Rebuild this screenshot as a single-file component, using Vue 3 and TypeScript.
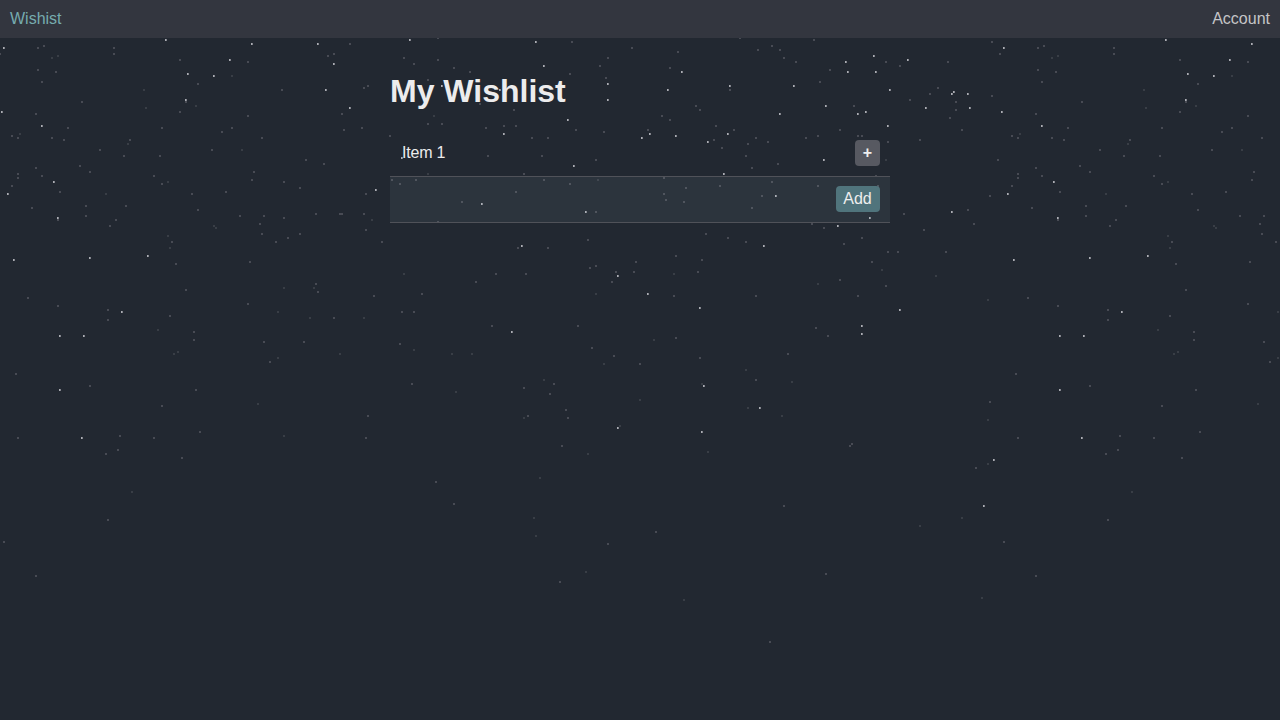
<script setup lang="ts">
import { ref } from 'vue'

type Star = [number, number]

// Sky tile: 1000px wide, repeated horizontally. Each star is a 2x2 square.
const parse = (list: string): Star[] =>
  list.trim().split(/\s+/).map((pair) => pair.split(',').map(Number) as Star)

const bright = parse(`
4,48 166,40 230,60 188,74 214,76 186,100 2,112 42,126
252,44 318,44 334,64 326,90 350,108 410,40 442,86
536,42 544,66 608,84 608,100 568,120 682,72 668,90 730,86 500,90
874,56 846,62 908,60 848,72 876,72 794,86 890,90 826,106 780,114 858,114 866,112 926,108 952,94 954,92 968,94 970,108 888,126
54,182 8,194 58,218 148,256 90,258 14,260
376,190 482,204 402,158
504,134 642,138 650,134 676,136 728,134 708,142 574,166 724,174 586,212 522,246
824,160 776,196 870,218 838,226 764,246 952,212
122,312 60,336 84,336 60,390 82,438
618,276 648,294 700,308 512,332 704,386 760,408 618,428 702,432 900,310 862,326 862,334 994,460 984,506
`)

const soft = parse(`
0,54 38,48 44,46 114,48 114,54 180,60 248,62 38,70 56,72 42,82 82,102 36,114 198,84 180,112 248,116 68,128 162,128 232,128 186,102
350,44 334,54 328,56 404,58 414,64 438,38 438,60 454,68 470,72 282,90 368,86 364,88 342,114 344,130 362,128 428,80 428,124 442,124 480,104 486,128
572,42 608,58 600,66 570,74 606,78 632,48 678,52 670,68 730,90 514,110 504,126 516,126 576,130 648,130 696,106 700,110 662,116 670,120 716,126 734,130 740,38
814,40 758,50 772,46 780,50 784,58 796,62 830,70 820,82 886,62 900,66 948,62 992,42 854,106 910,100 938,88 930,94 956,102 956,110 950,118 992,96 840,130 962,130
12,136 18,138 52,138 64,140 130,140 100,150 124,156 160,156 36,168 80,166 90,172 18,174 18,178 42,176 12,186 60,192 154,176 162,184 192,194 212,150 226,192 222,132 32,208 86,206 126,206 86,216 116,220 110,226 58,220 198,210 240,216 172,242
262,138 390,136 306,160 324,164 254,172 252,180 284,182 300,188 366,194 316,214 340,214 342,214 364,214 264,216 284,218 260,224 262,234 300,234 288,238 276,242 366,230 382,242 488,156 392,180 416,180 400,184 462,202 438,222
604,132 532,138 548,138 542,156 596,160 524,174 544,180 570,184 516,192 596,212 714,140 722,148 748,144 746,156 664,178 686,188 664,194 666,200 684,202 720,186 588,240 518,248 548,248 706,234 728,238 746,242 676,256 702,260
756,138 768,142 806,138 818,136 858,136 862,136 888,142 920,140 778,164 752,168 772,182 818,186 762,196 752,208 876,176 878,186 998,160 812,224 824,228 862,238 844,244 888,252 898,252 904,214 924,230 968,210 974,224 990,196 946,252 872,262
176,264 250,262 186,290 28,298 58,306 108,310 108,320 248,304 316,284 318,292 170,316 194,332 194,340 264,342 304,342 16,374 90,386 196,390 162,406 18,438 120,436 154,438 118,450 106,454 200,432 182,458 108,520 4,542 36,576 270,362 334,318 374,296 422,294 402,312 414,312 492,326 400,344 412,384 368,416 366,438 436,482 454,504 476,282 496,274
526,274 590,268 596,266 636,262 616,272 634,272 612,282 698,272 674,296 578,326 676,338 592,348 614,356 640,364 700,358 524,388 554,384 550,394 566,410 528,416 568,418 562,446 756,296 840,280 886,286 858,296 816,328 828,336 788,354 756,380 990,402 852,444 850,446 976,468 656,532 608,544 560,582 784,506 826,574 770,642
`)

const faint = parse(`
52,58 58,56 144,90 146,108 196,106 232,76 434,116
20,134 128,144 168,182 106,194 242,150 214,226 216,228 168,236 170,248
372,220 428,174 598,180 886,160 404,274
132,492 158,330 178,352 174,354 284,288 314,288 278,312 310,318 364,318 414,350 452,354 472,354 340,354 278,358 258,404 284,436 456,392
596,294 674,274 654,340 604,364 544,380 524,418 702,384 640,400 746,370 748,408 792,382 782,416 620,426 708,452 588,454 540,478 534,518 536,536 586,572 684,600 882,270 818,284 936,276 988,300 988,420 988,464 962,518 920,526 982,598
`)

const tilePath = (stars: Star[], width = 2, shift = 0): string =>
  [0, 1000]
    .flatMap((offset) =>
      stars.map(([x, y]) => `M${x - 1 + offset + shift} ${y - 1}h${width}v2h-${width}z`)
    )
    .join('')

const brightLeft = tilePath(bright, 1)
const brightRight = tilePath(bright, 1, 1)
const softPath = tilePath(soft)
const faintPath = tilePath(faint)

const items = ref<string[]>(['Item 1'])
const draft = ref('')

function addItem(): void {
  const name = draft.value.trim()
  if (!name) return
  items.value.push(name)
  draft.value = ''
}
</script>

<template>
  <div class="page">
    <svg class="sky" width="1280" height="720" viewBox="0 0 1280 720" shape-rendering="crispEdges" aria-hidden="true">
      <path class="faint" :d="faintPath" />
      <path class="soft" :d="softPath" />
      <path class="bright-left" :d="brightLeft" />
      <path class="bright-right" :d="brightRight" />
    </svg>
    <header class="bar">
      <a class="brand">Wishist</a>
      <a class="account">Account</a>
    </header>
    <main class="content">
      <h1>My Wishlist</h1>
      <ul class="list">
        <li v-for="item in items" :key="item" class="row">
          <span class="name">{{ item }}</span>
          <button class="btn plus" type="button">+</button>
        </li>
        <li class="row entry">
          <input v-model="draft" class="name" type="text" aria-label="New item" @keyup.enter="addItem" />
          <button class="btn add" type="button" @click="addItem">Add</button>
        </li>
      </ul>
    </main>
  </div>
</template>

<style>
body {
  background: #222831;
}
</style>

<style scoped>
.page {
  position: relative;
  height: 720px;
  overflow: hidden;
  background: #222831;
  color: #ececed;
  font-family: "Liberation Sans", Arial, sans-serif;
  font-size: 16px;
  line-height: 18px;
}
.sky {
  position: absolute;
  inset: 0;
}
.faint { fill: #393e46; }
.soft { fill: #484b54; }
.bright-left { fill: #acaeb4; }
.bright-right { fill: #83858d; }
.bar {
  position: relative;
  box-sizing: border-box;
  display: flex;
  justify-content: space-between;
  height: 38px;
  padding: 10px;
  background: #33363f;
}
.brand { color: #76abae; }
.account { color: #c4c5c7; }
.content {
  position: relative;
  width: 500px;
  margin: 0 auto;
}
h1 {
  margin: 0;
  padding: 35px 0 21px;
  font-size: 32px;
  line-height: 36px;
  font-weight: bold;
}
.list {
  margin: 0;
  padding: 0;
  list-style: none;
}
.row {
  box-sizing: border-box;
  display: flex;
  align-items: center;
  height: 47px;
  padding: 0 10px;
  border-bottom: 1px solid #505259;
}
.entry {
  height: 46px;
  padding-bottom: 1px;
  background: rgba(200, 220, 245, 0.065);
}
.name {
  flex: 1;
  min-width: 0;
  padding: 0 2px;
  letter-spacing: -0.2px;
}
input.name {
  border: 0;
  outline: 0;
  background: transparent;
  color: inherit;
  font: inherit;
}
.btn {
  height: 26px;
  padding: 0;
  border: 0;
  border-radius: 4px;
  color: #eeeeee;
  font: inherit;
}
.plus {
  width: 25px;
  background: #575961;
  font-weight: bold;
}
.add {
  width: 44px;
  padding-right: 1px;
  background: #50747c;
}
</style>
